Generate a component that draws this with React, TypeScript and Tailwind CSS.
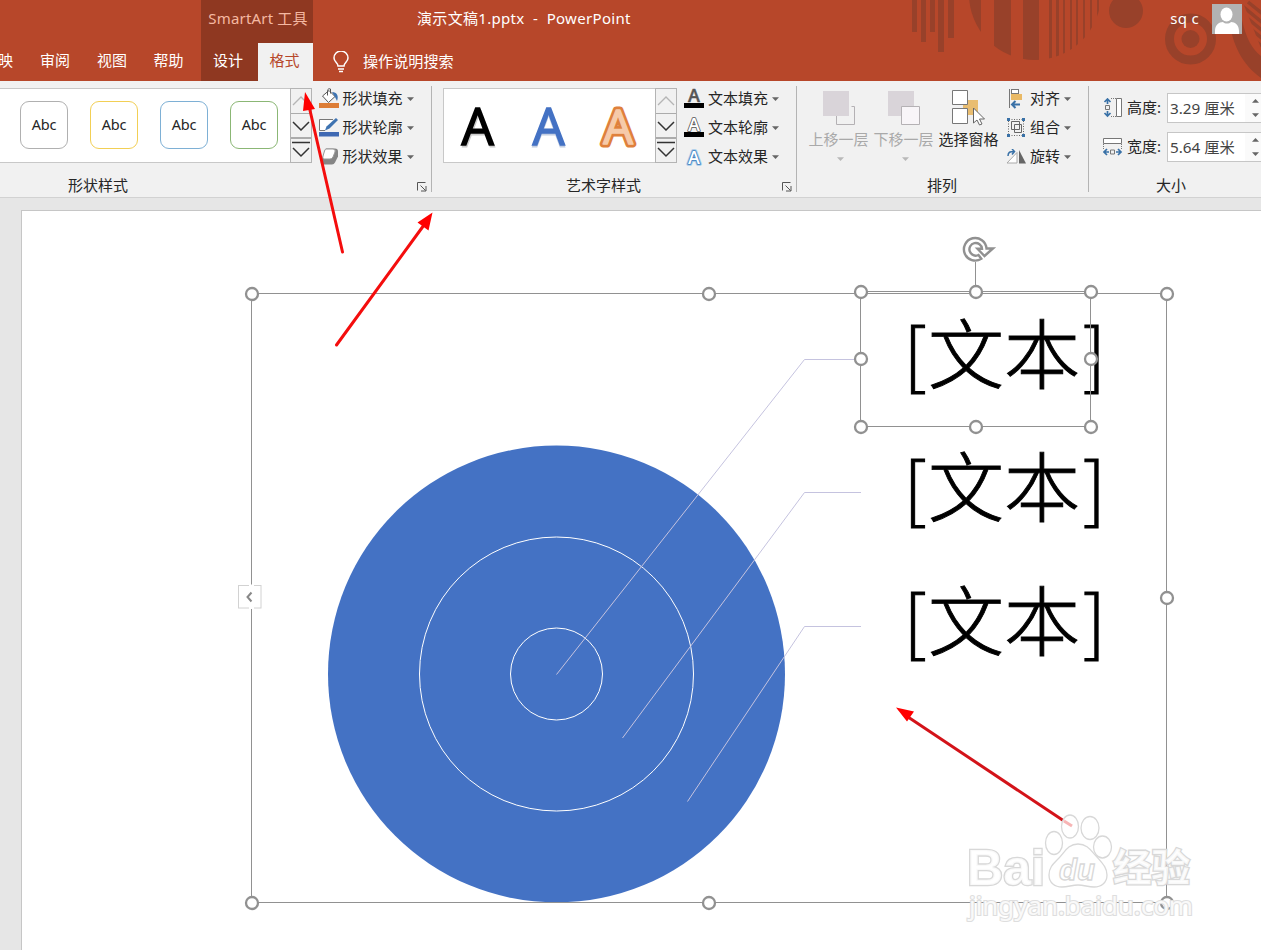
import React from "react";

type P = { children?: React.ReactNode; className?: string };

const Caret = ({ className = "" }: P) => (
  <svg width="7" height="4" viewBox="0 0 7 4" className={`shrink-0 ${className}`}>
    <path d="M0 0.300h7L3.500 3.900z" fill="currentColor" />
  </svg>
);

const Tab = ({ children, className = "" }: P) => (
  <div className={`flex h-[38px] items-center justify-center whitespace-nowrap pb-[4px] ${className}`}>{children}</div>
);

const HeaderArt = () => (
  <svg className="absolute right-0 top-0" width="381" height="81" viewBox="880 0 381 81" fill="#98412a">
    <defs>
      <clipPath id="disc"><circle cx="1035" cy="-6" r="66" /></clipPath>
      <clipPath id="hatch"><path d="M1242 0h19v48z" /></clipPath>
    </defs>
    <path d="M912 0h5v32h-5zM921 0h5v42h-5zM930 0h5v32h-5zM938 0h6v52h-6zM948 0h6v38h-6z" />
    <path clipPath="url(#disc)" d="M968 0h13v80h-13zM994 0h17v80h-17zM1023 0h16v80h-16zM1049 0h3v80h-3zM1056 0h3v80h-3zM1063 0h2v80h-2zM1070 0h2v80h-2zM1076 0h2v80h-2zM1083 0h2v80h-2zM1090 0h2v80h-2zM1097 0h2v80h-2z" />
    <circle cx="1126" cy="11" r="17" />
    <circle cx="1190.500" cy="39" r="21" fill="none" stroke="#98412a" strokeWidth="9" />
    <circle cx="1190.500" cy="39" r="9" />
    <path d="M1229 20C1233 46 1242 64 1261 78V56C1252 49 1246 38 1242 20z" />
    <path clipPath="url(#hatch)" d="M1240 4l24 20M1240 12l24 20M1240 20l24 20M1240 28l24 20M1248 2l16 13" stroke="#98412a" strokeWidth="3.500" />
  </svg>
);

const GalleryButtons = () => (
  <div className="-my-px -mr-px flex w-[22px] flex-col border border-[#b4b4b4] bg-[#f1f1f1]">
    <div className="flex h-[25px] items-center justify-center border-b border-[#ababab]">
      <svg width="18" height="10" viewBox="0 0 18 10"><path d="M1 9l8-8 8 8" fill="none" stroke="#b5b5b5" strokeWidth="1.300" /></svg>
    </div>
    <div className="flex h-[25px] items-center justify-center border-b-2 border-[#ababab]">
      <svg width="18" height="10" viewBox="0 0 18 10"><path d="M1 1l8 8 8-8" fill="none" stroke="#333" strokeWidth="1.500" /></svg>
    </div>
    <div className="flex h-[22px] items-center justify-center">
      <svg width="20" height="18" viewBox="0 0 20 18"><path d="M1 1.500h18M2 7l8 8 8-8" fill="none" stroke="#333" strokeWidth="1.500" /></svg>
    </div>
  </div>
);

const Menu = ({ icon, label }: { icon: React.ReactNode; label: string }) => (
  <div className="flex h-[29px] items-center whitespace-nowrap">
    <span className="mr-[3px] flex w-[21px] shrink-0 justify-start">{icon}</span>
    <span className="-mt-[2px]">{label}</span>
    <Caret className="ml-[4px] mt-[1px] text-[#666]" />
  </div>
);

const Launcher = () => (
  <svg width="10" height="10" viewBox="0 0 10 10" fill="none" stroke="#555" className="absolute bottom-[5px] right-[4px]">
    <path d="M.5 8.500v-8h8M3.500 3.500l5 5M9 4v5H4" />
  </svg>
);

const FillIcon = () => (
  <svg width="21" height="22" viewBox="0 0 21 22">
    <rect x="0" y="15" width="20" height="5" fill="#dd7d36" />
    <path d="M3.500 8L10 2.500l6 6-6.500 6z" fill="#fff" stroke="#555" />
    <path d="M8.500 7.500V2.500a2 2 0 0 1 3-1.500v4.500" fill="none" stroke="#555" />
    <path d="M13 4c5 0 7 4 5 9l-2-4z" fill="#3e73b1" />
  </svg>
);
const OutlineIcon = () => (
  <svg width="21" height="20" viewBox="0 0 21 20">
    <rect x="0" y="14" width="20" height="4.500" fill="#3f69b3" />
    <path d="M14 1.500H.5v11H6" fill="#fff" stroke="#777" />
    <path d="M6 12.500l1.500-4L17 0l2 2-8.500 8.500z" fill="#3e73b1" />
  </svg>
);
const EffectIcon = () => (
  <svg width="21" height="17" viewBox="0 0 21 17">
    <path d="M7 .5h9q3 0 3 3v5l-3 6q-1 2-3 2H4q-3 0-2-4z" fill="#858585" />
    <path d="M7 1h7q3 0 2 3l-2 5q-1 2-3 2H5q-2 0-1-3l1.500-5Q6 1 7 1z" fill="#fff" stroke="#999" />
  </svg>
);
const TextIcon = ({ kind }: { kind: "fill" | "line" | "glow" }) => (
  <svg width="21" height="20" viewBox="0 0 21 20" className="overflow-visible">
    {kind !== "glow" && <rect x="0" y="14" width="20" height="5" fill="#000" />}
    {kind === "glow" && (
      <text x="10" y="16.500" textAnchor="middle" className="font-semibold" fontFamily="Open Sans, sans-serif" fontSize="18" fill="none" stroke="#a5cbea" strokeWidth="3.600" strokeLinejoin="round">A</text>
    )}
    <text
      x="10" y={kind === "glow" ? 16.5 : 12.5} textAnchor="middle" className="font-semibold"
      fontFamily="Open Sans, sans-serif" fontSize={18}
      fill={kind === "fill" ? "#555" : "#fff"}
      stroke={kind === "glow" ? "#3f80be" : "#555"}
      strokeWidth={kind === "fill" ? 0.5 : 1.6}
      strokeLinejoin="round" paintOrder="stroke"
    >A</text>
  </svg>
);
const AlignIcon = () => (
  <svg width="21" height="20" viewBox="0 0 21 20">
    <path d="M3.500 0v19" stroke="#777" />
    <rect x="5.500" y=".5" width="7" height="4" fill="#fff" stroke="#777" />
    <rect x="5" y="5" width="11" height="6" fill="#e9b965" />
    <path d="M6 15.500h8M9.500 12L6 15.500 9.500 19" fill="none" stroke="#3971a7" strokeWidth="2" />
  </svg>
);
const GroupIcon = () => (
  <svg width="21" height="20" viewBox="0 0 21 20" fill="none">
    <path d="M3 1.500h14M3 17.500h14M2.500 3v14M17.500 3v14" stroke="#666" strokeDasharray="1 1.500" />
    <path d="M5.500 3.500h8v8h-8zM8.500 6.500h7v8h-7z" stroke="#666" />
    <path d="M1 0h3v3H1zM16 0h3v3h-3zM1 16h3v3H1zM16 16h3v3h-3z" fill="#3971a7" />
  </svg>
);
const RotateIcon = () => (
  <svg width="21" height="16" viewBox="0 0 21 16" fill="none">
    <path d="M11 3.500v10.500H1z" fill="#fff" stroke="#aaa" />
    <path d="M13 1l7 13.500h-7z" fill="#666" />
    <path d="M2 7c0-4 2-4.500 6-4.500M6 0L8.500 2.500 6 5.500" stroke="#3971a7" strokeWidth="1.500" />
  </svg>
);

const Big = ({ children, label, dim }: { children: React.ReactNode; label: string; dim?: boolean }) => (
  <div className={`flex w-[65px] flex-col items-center ${dim ? "text-[#a9a9a9]" : "text-[#262626]"}`}>
    <svg width="36" height="38" viewBox="0 0 36 38">{children}</svg>
    <span className="mt-[2px] h-[22px] whitespace-nowrap leading-[22px]">{label}</span>
    {dim && <Caret className="ml-[4px] mt-[7px] text-[#b8b8b8]" />}
  </div>
);

const SizeRow = ({ icon, label, value }: { icon: React.ReactNode; label: string; value: string }) => (
  <div className="flex h-[30px] items-center whitespace-nowrap">
    <span className="w-[24px] shrink-0">{icon}</span>
    <span className="-mt-[2px] w-[40px] shrink-0">{label}</span>
    <div className="flex h-[30px] w-[110px] shrink-0 items-center border border-[#c6c6c6] bg-white pl-[2px] text-[#444]">
      <span className="w-[75px] text-[15.300px]">{value}</span>
      <div className="flex h-full flex-1 flex-col justify-between bg-[#fafafa] py-[5px] pl-[7px] text-[#666]">
        <Caret className="rotate-180" />
        <Caret />
      </div>
    </div>
  </div>
);

const shapeStyles = ["border-[#b0b0b0]", "border-[#f2cf55]", "border-[#7eb0d5]", "border-[#8bb775]"];

const Handle = ({ x, y }: { x: number; y: number }) => (
  <circle cx={x} cy={y} r="6" fill="#fff" stroke="#919191" strokeWidth="2.300" />
);

const Slide = () => (
  <svg width="1239" height="739" viewBox="22 211 1239 739" fill="none" className="block">
    <circle cx="556.500" cy="674" r="228.500" fill="#4472c4" />
    <circle cx="556.500" cy="674" r="137" stroke="#fff" />
    <circle cx="556.500" cy="674" r="46" stroke="#fff" />
    <path d="M556.500 674.500L804.500 359.500H861M622.500 738L804.500 492.500H861M687.500 801.500L804.500 626.500H861" stroke="#c5c3df" />
    {[0, 133.500, 267].map((dy) => (
      <g key={dy} fill="#000" stroke="#000" fontFamily="Noto Sans CJK SC, sans-serif" className="font-light">
        <text x="928" y={382.500 + dy} fontSize="76" strokeWidth="0.900" textLength="152">文本</text>
        <text x="903.500" y={382 + dy} fontSize="73" strokeWidth="1">[</text>
        <text x="1083" y={382 + dy} fontSize="73" strokeWidth="1">]</text>
      </g>
    ))}
    <path d="M251.500 293.500h915v609h-915zM860.500 291.500h230v135h-230zM975.500 262v30" stroke="#919191" />
    {[[252, 294], [709, 294], [1167, 294], [1167, 598], [252, 903], [709, 903], [1167, 903], [861, 292], [976, 292], [1091, 292], [861, 359], [1091, 359], [861, 427], [976, 427], [1091, 427]].map(([x, y]) => (
      <Handle key={`${x}-${y}`} x={x} y={y} />
    ))}
    <path
      d="M981.300 258.800A11.300 11.300 0 1 1 986.500 248.500H993L984.500 256 977.500 248.800H982A6.300 6.300 0 1 0 978.500 255z"
      fill="#fff" stroke="#919191" strokeWidth="2.400"
    />
    <rect x="238.500" y="585.500" width="22.500" height="22.500" fill="#fff" stroke="#d2d2d2" />
    <path d="M249 585.500h5M249 608h5" stroke="#fff" strokeWidth="2" />
    <path d="M251.500 592.500l-4 4.500 4 4.500" stroke="#888" strokeWidth="2" />
  </svg>
);

const Overlay = () => (
  <svg className="pointer-events-none absolute left-0 top-0" width="1261" height="950" viewBox="0 0 1261 950">
    <g stroke="#f40d0d" strokeWidth="3" strokeLinecap="round">
      <path d="M342.500 252L309 106M336.500 345L424 225" />
      <path d="M1064 821L908 717" stroke="#d31319" strokeLinecap="butt" />
    </g>
    <path d="M305 92l10 17-12 2zM432.500 212.500l-4 18-11-8zM896 707.500l18 4-7 10z" fill="#ff0000" />
    <g fill="#fff" fillOpacity="0.850" stroke="#d8d8d8" strokeWidth="1.300">
      <text x="967" y="885" fontSize="50" textLength="78" lengthAdjust="spacingAndGlyphs" paintOrder="stroke" strokeWidth="2.600" className="font-bold" fontFamily="Liberation Sans, sans-serif">Bai</text>
      <text x="1113" y="881" fontSize="38" textLength="77" lengthAdjust="spacingAndGlyphs" paintOrder="stroke" strokeWidth="2.600" className="font-bold" fontFamily="Noto Sans CJK SC, sans-serif">经验</text>
      <ellipse cx="1054" cy="843" rx="8.500" ry="11.500" />
      <ellipse cx="1070" cy="826.500" rx="8.500" ry="11.500" />
      <ellipse cx="1090" cy="828" rx="9" ry="11.500" />
      <ellipse cx="1102.500" cy="847" rx="9" ry="11" />
      <path d="M1078 844c-10 0-13 8-19 14-7 7-10 10-10 17 0 8 6 12 13 12 6 0 10-2 16-2s10 2 16 2c7 0 13-4 13-12 0-7-4-11-10-18-6-6-9-13-19-13z" />
      <text x="1059" y="880" fontSize="29" textLength="36" lengthAdjust="spacingAndGlyphs" className="font-bold italic" fontFamily="Liberation Sans, sans-serif">du</text>
      <text x="969" y="915" fontSize="25" textLength="224" lengthAdjust="spacingAndGlyphs" paintOrder="stroke" strokeWidth="2.200" stroke="#dedede" fontFamily="Noto Sans, sans-serif">jingyan.baidu.com</text>
    </g>
    <path d="M1064 821l8 5" stroke="#f7b5b5" strokeWidth="3" />
  </svg>
);

export default function App() {
  return (
    <div className="relative flex h-[950px] w-[1261px] flex-col overflow-hidden bg-[#e6e6e6] font-['Noto_Sans','Noto_Sans_CJK_SC',sans-serif] text-[15px] leading-[22px] text-[#262626]">
      <header className="relative h-[81px] shrink-0 bg-[#b7472a] text-white">
        <HeaderArt />
        <div className="relative flex h-[43px]">
          <div className="ml-[201px] flex w-[112px] items-center justify-center whitespace-nowrap bg-[#8f3821] pb-[8px] pl-[2px] text-[15px] tracking-[0.180px] text-[#f5b8a2]">SmartArt 工具</div>
          <div className="ml-[104px] flex items-center whitespace-pre pb-[8px] text-[15px] tracking-[0.320px]">演示文稿1.pptx  -  PowerPoint</div>
          <div className="ml-auto mr-[19px] flex items-start">
            <span className="mt-[7px] text-[15px] tracking-[0.300px]">sq c</span>
            <svg width="30" height="30" viewBox="0 0 30 30" className="ml-[13px] mt-[4px]">
              <path d="M0 0h30v30H0z" fill="#b2b2b2" />
              <path d="M3 30v-3c0-6 4-9 8-9 2 2 6 2 8 0 4 0 8 3 8 9v3z" fill="#fff" />
              <ellipse cx="14.500" cy="10.500" rx="6" ry="7" fill="#fff" />
            </svg>
          </div>
        </div>
        <div className="relative flex h-[38px]">
          <Tab className="-ml-[2px] w-[15px]">映</Tab>
          <Tab className="ml-[13px] w-[58px]">审阅</Tab>
          <Tab className="w-[56px]">视图</Tab>
          <Tab className="w-[57px]">帮助</Tab>
          <Tab className="ml-[4px] w-[57px] bg-[#8f3821] pr-[3px]">设计</Tab>
          <Tab className="w-[55px] bg-[#f1f1f1] pr-[2px] text-[#b7472a]">格式</Tab>
          <Tab className="ml-[20px]">
            <svg width="16" height="22" viewBox="0 0 16 22" fill="none" stroke="#fff" strokeWidth="1.500" className="mt-[4px]">
              <path d="M5 15c0-3-4-4-4-8a7 7 0 0 1 14 0c0 4-4 5-4 8zM5 18h6M6 20.500h4" />
            </svg>
            <span className="ml-[14px] mt-[2px] text-[15.100px]">操作说明搜索</span>
          </Tab>
        </div>
      </header>

      <section className="flex h-[117px] shrink-0 border-b border-[#d2d2d2] bg-[#f1f1f1]">
        <div className="relative w-[431px] pt-[7px]">
          <div className="flex">
            <div className="flex h-[75px] w-[312px] border border-l-0 border-[#c8c8c8] bg-white">
              <div className="flex flex-1 items-center gap-[22px] pb-px pl-[20px]">
                {shapeStyles.map((s) => (
                  <div key={s} className={`flex h-[48px] w-[48px] shrink-0 items-center justify-center rounded-[9px] border-[1.500px] bg-white pb-[3px] text-[14.500px] tracking-[-0.200px] ${s}`}>Abc</div>
                ))}
              </div>
              <GalleryButtons />
            </div>
            <div className="-mt-[4px] ml-[6.500px]">
              <Menu icon={<FillIcon />} label="形状填充" />
              <Menu icon={<OutlineIcon />} label="形状轮廓" />
              <Menu icon={<EffectIcon />} label="形状效果" />
            </div>
          </div>
          <div className="absolute bottom-px left-[68px]">形状样式</div>
          <Launcher />
        </div>
        <div className="mt-[5px] h-[106px] w-px bg-[#b4b4b4]" />
        <div className="relative w-[364px] pt-[7px]">
          <div className="flex pl-[11px]">
            <div className="flex h-[75px] w-[233px] border border-[#c8c8c8] bg-white">
              <svg width="211" height="73" viewBox="444 89 211 73" fontFamily="Open Sans, sans-serif" fontSize="51" textAnchor="middle" className="shrink-0">
                <g className="font-medium">
                  <text x="478.500" y="146.500" fill="#ccc" stroke="#ccc" strokeWidth="1.200">A</text>
                  <text x="477.500" y="145" fill="#000" stroke="#000" strokeWidth="1.600">A</text>
                  <text x="548.500" y="146.500" fill="#c5cfe2" stroke="#c5cfe2" strokeWidth="1.200">A</text>
                  <text x="548.500" y="145" fill="#4472c4" stroke="#4472c4" strokeWidth="1.400">A</text>
                </g>
                <g strokeLinejoin="round" fontSize="47" className="font-medium">
                  <text x="618" y="143.500" fill="#df803c" stroke="#df803c" strokeWidth="7">A</text>
                  <text x="618" y="143.500" fill="#f6caa9" stroke="#f6caa9" strokeWidth="1.600">A</text>
                </g>
              </svg>
              <GalleryButtons />
            </div>
            <div className="-mt-[4px] ml-[8px]">
              <Menu icon={<TextIcon kind="fill" />} label="文本填充" />
              <Menu icon={<TextIcon kind="line" />} label="文本轮廓" />
              <Menu icon={<TextIcon kind="glow" />} label="文本效果" />
            </div>
          </div>
          <div className="absolute bottom-px left-[134px]">艺术字样式</div>
          <Launcher />
        </div>
        <div className="mt-[5px] h-[106px] w-px bg-[#b4b4b4]" />
        <div className="relative w-[291px] pt-[7px]">
          <div className="flex pl-[9px]">
            <Big label="上移一层" dim>
              <path d="M30.500 18.500h3v18h-18v-9" stroke="#b4b1b4" fill="none" />
              <path d="M2 3h26v25H2z" fill="#d9d4d9" />
            </Big>
            <Big label="下移一层" dim>
              <path d="M2 3h26v25H2z" fill="#d9d4d9" />
              <path d="M15.500 18.500h18v18h-18z" stroke="#b4b1b4" fill="#f8f5f8" />
            </Big>
            <Big label="选择窗格">
              <path d="M12 12h15v15H12z" fill="#e9bd70" />
              <path d="M1.500 2.500h15v14h-15zM1.500 20.500h15v15h-15z" fill="#fff" stroke="#777" />
              <path d="M22.500 20v15l3.500-3 2.500 5 2.500-1-2.500-5h5z" fill="#fff" stroke="#666" />
            </Big>
            <div className="-mt-[4px] ml-[5px]">
              <Menu icon={<AlignIcon />} label="对齐" />
              <Menu icon={<GroupIcon />} label="组合" />
              <Menu icon={<RotateIcon />} label="旋转" />
            </div>
          </div>
          <div className="absolute bottom-px left-[130px]">排列</div>
        </div>
        <div className="mt-[5px] h-[106px] w-px bg-[#b4b4b4]" />
        <div className="relative flex w-[172px] flex-col gap-[9px] overflow-hidden pl-[14px] pt-[12px]">
          <SizeRow
            label="高度:" value="3.29 厘米"
            icon={<svg width="20" height="20" viewBox="0 0 20 20" fill="none"><path d="M13.500.5h5v18h-5z" fill="#fff" stroke="#777" /><path d="M8 .5h5M8 18.500h5" stroke="#777" strokeDasharray="1 1" /><path d="M1.500 4l3-3 3 3M4.500 1v5M1.500 15l3 3 3-3M4.500 18v-5" stroke="#3971a7" strokeWidth="1.700" /><path d="M2.500 7.500h4v4h-4z" stroke="#777" /></svg>}
          />
          <SizeRow
            label="宽度:" value="5.64 厘米"
            icon={<svg width="20" height="20" viewBox="0 0 20 20" fill="none"><path d="M.5 1.500h18v5H.5z" fill="#fff" stroke="#777" /><path d="M.5 7v6M18.500 7v6" stroke="#777" strokeDasharray="1 1" /><path d="M4 12l-3 3 3 3M1 15h5M15 12l3 3-3 3M18 15h-5" stroke="#3971a7" strokeWidth="1.700" /><path d="M7.500 13h4v4h-4z" stroke="#777" /></svg>}
          />
          <div className="absolute bottom-px left-[67px]">大小</div>
        </div>
      </section>

      <main className="ml-[21px] mt-[12px] flex-1 overflow-hidden border-l border-t border-[#c6c6c6] bg-white">
        <Slide />
      </main>
      <Overlay />
    </div>
  );
}
